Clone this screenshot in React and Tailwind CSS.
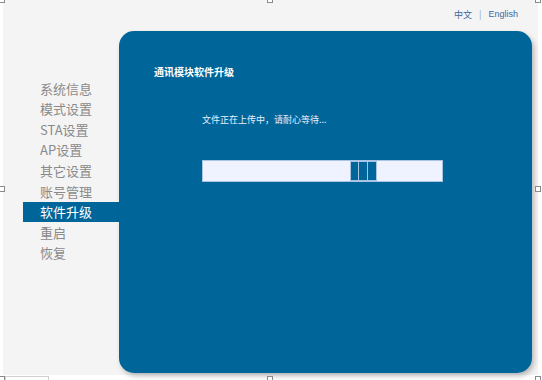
import React from "react";

const menu = ["系统信息", "模式设置", "STA设置", "AP设置", "其它设置", "账号管理", "软件升级", "重启", "恢复"];

function Handle({ className }) {
  return <div className={`absolute w-[6px] h-[6px] border border-[#8a8a8a] bg-white ${className}`} />;
}

export default function App() {
  return (
    <div
      className="relative w-[542px] h-[380px] bg-white overflow-hidden"
      style={{ fontFamily: '"Microsoft YaHei", "Noto Sans CJK SC", "Liberation Sans", sans-serif' }}
    >
      <div className="ml-[3px] w-[535px] h-[375px] bg-[#f4f4f4] flex flex-col">
        <div className="h-[31px] flex justify-end items-start pt-[9px] pr-[20px] text-[9px] leading-[11px] text-[#3f68a3]">
          <span>中文</span>
          <span className="mx-[7px] text-[#8fa5c8]">|</span>
          <span style={{ fontFamily: '"Liberation Sans", sans-serif' }}>English</span>
        </div>
        <div className="flex flex-1">
          <div className="w-[116px] pt-[47px]">
            {menu.map((m, i) => (
              <div
                key={m}
                className={`ml-[20px] h-[20.6px] flex items-center pl-[17px] text-[13px] ${
                  i === 6 ? "bg-[#006699] text-white" : "text-[#8a8a8a]"
                }`}
              >
                {m}
              </div>
            ))}
          </div>
          <div className="w-[413px] h-[342px] bg-[#006699] rounded-[15px] shadow-[2px_3px_5px_rgba(0,0,0,0.25)]">
            <div className="pl-[35px] pt-[35px] text-[10px] font-bold text-white leading-[12px]"
              style={{ fontFamily: '"Noto Sans CJK SC", "SimSun", serif' }}>
              通讯模块软件升级
            </div>
            <div className="pl-[83px] pt-[36px] text-[9px] text-[#e8f0ff] leading-[12px]">
              文件正在上传中，请耐心等待...
            </div>
            <div className="ml-[83px] mt-[34px] w-[241px] h-[22px] bg-[#eef3ff] border border-[#a9c4e4] flex">
              <div className="w-[147px]" />
              <div className="w-[9px] h-full bg-[#006699] border border-[#a9c4e4]" />
              <div className="w-[9px] h-full bg-[#006699] border border-[#a9c4e4] border-l-0" />
              <div className="w-[9px] h-full bg-[#006699] border border-[#a9c4e4] border-l-0" />
            </div>
          </div>
        </div>
      </div>
      <div className="absolute left-[5px] top-[376px] w-[44px] h-[6px] border border-[#d0d0d0] bg-white" />
      <Handle className="left-[-1px] top-[-3px]" />
      <Handle className="left-[267px] top-[-3px]" />
      <Handle className="left-[535px] top-[-3px]" />
      <Handle className="left-[-1px] top-[186px]" />
      <Handle className="left-[535px] top-[186px]" />
      <Handle className="left-[-1px] top-[376px]" />
      <Handle className="left-[267px] top-[376px]" />
      <Handle className="left-[535px] top-[376px]" />
    </div>
  );
}
